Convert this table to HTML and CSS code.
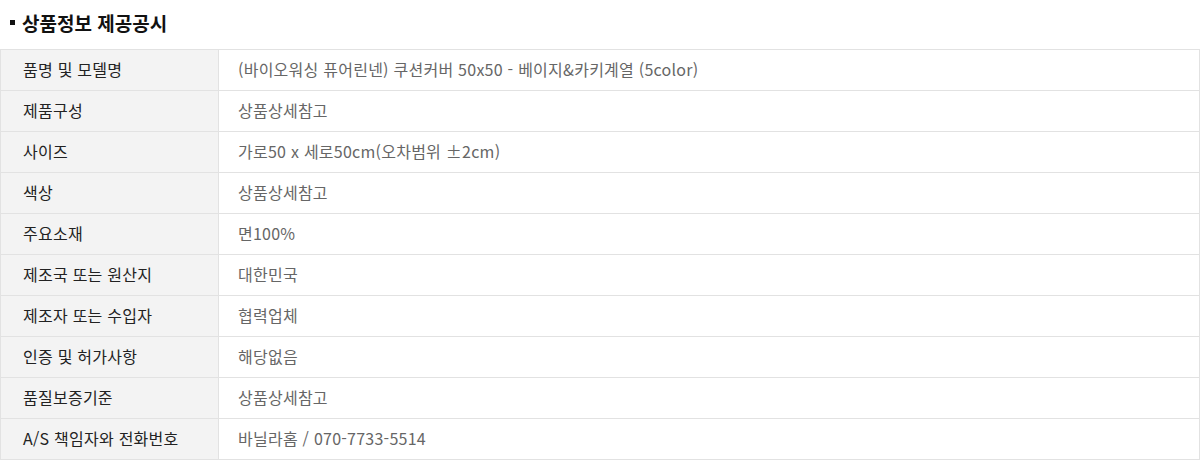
FILE: index.html
```html
<!DOCTYPE html>
<html lang="ko">
<head>
<meta charset="utf-8">
<link rel="stylesheet" href="styles.css">
</head>
<body>
<div class="wrap">
  <h2 class="title"><span class="bullet"></span>상품정보 제공공시</h2>
  <table class="info">
    <tr><th>품명 및 모델명</th><td>(바이오워싱 퓨어린넨) 쿠션커버 50x50 - 베이지&amp;카키계열 (5color)</td></tr>
    <tr><th>제품구성</th><td>상품상세참고</td></tr>
    <tr><th>사이즈</th><td>가로50 x 세로50cm(오차범위 ±2cm)</td></tr>
    <tr><th>색상</th><td>상품상세참고</td></tr>
    <tr><th>주요소재</th><td>면100%</td></tr>
    <tr><th>제조국 또는 원산지</th><td>대한민국</td></tr>
    <tr><th>제조자 또는 수입자</th><td>협력업체</td></tr>
    <tr><th>인증 및 허가사항</th><td>해당없음</td></tr>
    <tr><th>품질보증기준</th><td>상품상세참고</td></tr>
    <tr><th>A/S 책임자와 전화번호</th><td>바닐라홈 / 070-7733-5514</td></tr>
  </table>
</div>
</body>
</html>
```

FILE: styles.css
```css
html, body {
  margin: 0;
  padding: 0;
  background: #fff;
}
body {
  font-family: "Noto Sans CJK KR", "Noto Sans", sans-serif;
}
.wrap {
  width: 1200px;
}
.title {
  box-sizing: border-box;
  display: flex;
  align-items: center;
  margin: 0;
  height: 49px;
  padding: 0 0 4px 10px;
  font-size: 19px;
  font-weight: 700;
  color: #111;
  letter-spacing: 0;
}
.bullet {
  width: 5px;
  height: 5px;
  background: #111;
  margin-right: 7px;
}
.info {
  width: 1200px;
  border-collapse: collapse;
  table-layout: fixed;
}
.info th, .info td {
  border: 1px solid #e2e2e2;
  height: 38px;
  padding: 0 0 2px 0;
  font-size: 16px;
  line-height: 22px;
  font-weight: 400;
  text-align: left;
  vertical-align: middle;
  letter-spacing: 0.25px;
}
.info th {
  width: 195px;
  padding-left: 22px;
  background: #f3f3f3;
  color: #222;
}
.info td {
  padding-left: 19px;
  color: #666;
}
```
